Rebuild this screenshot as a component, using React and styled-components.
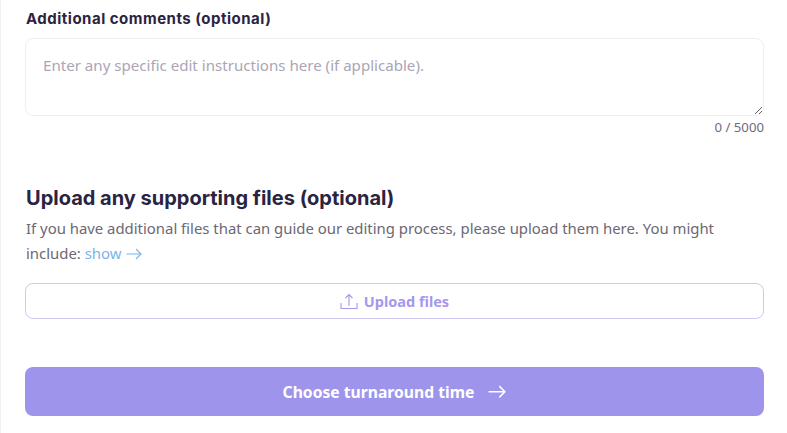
import React from "react";
import styled, { createGlobalStyle } from "styled-components";

const GlobalStyle = createGlobalStyle`
  html, body {
    margin: 0;
    padding: 0;
    background: #fff;
    overflow: hidden;
  }
`;

const Page = styled.div`
  width: 787px;
  height: 433px;
  box-sizing: border-box;
  padding: 10px 23px 0 24px;
  border-left: 1px solid #f2f2f2;
  font-family: "Noto Sans", "Liberation Sans", sans-serif;
  color: #6b6873;
`;

const Label = styled.label`
  display: block;
  height: 18px;
  line-height: 18px;
  margin-bottom: 10px;
  padding-left: 1px;
  font-family: "Inter", sans-serif;
  font-size: 15px;
  font-weight: 700;
  letter-spacing: 0.5px;
  color: #2a2342;
`;

const CommentBox = styled.textarea`
  display: block;
  width: 100%;
  height: 78px;
  box-sizing: border-box;
  padding: 15px 17px;
  border: 1px solid #efeef1;
  border-radius: 8px;
  outline: none;
  font-family: "Noto Sans", sans-serif;
  font-size: 15.1px;
  line-height: 22px;
  &::placeholder {
    color: #aaa6b6;
    opacity: 1;
  }
`;

const Counter = styled.div`
  margin-top: 2px;
  height: 18px;
  line-height: 18px;
  text-align: right;
  font-size: 13.2px;
  color: #6e6d7a;
`;

const Heading = styled.h2`
  margin: 50px 0 0;
  padding-left: 1px;
  height: 24px;
  line-height: 24px;
  font-family: "Inter", sans-serif;
  font-size: 20px;
  font-weight: 700;
  color: #2a2342;
`;

const Description = styled.p`
  margin: 6px 0 0;
  padding-left: 1px;
  font-size: 14.9px;
  line-height: 25px;
`;

const ShowLink = styled.a`
  color: #79b4ea;
  svg {
    margin-left: 1px;
    vertical-align: -1px;
  }
`;

const UploadButton = styled.button`
  display: flex;
  align-items: center;
  justify-content: center;
  gap: 6px;
  width: 100%;
  height: 36px;
  margin-top: 17px;
  padding: 0;
  background: #fff;
  border: 1px solid #cfc8f3;
  border-radius: 8px;
  font-family: "Noto Sans", sans-serif;
  font-size: 14.5px;
  font-weight: 700;
  color: #a597ee;
`;

const SubmitButton = styled.button`
  display: flex;
  align-items: center;
  justify-content: center;
  gap: 14px;
  width: 100%;
  height: 49px;
  margin-top: 48px;
  padding: 0;
  background: #9e94ec;
  border: 0;
  border-radius: 8px;
  font-family: "Noto Sans", sans-serif;
  font-size: 15.7px;
  font-weight: 700;
  color: #fff;
`;

function ArrowIcon({ size, color, weight = 1.1 }) {
  return (
    <svg width={size} height={size * 0.75} viewBox="0 0 16 12" fill="none" stroke={color} strokeWidth={weight}>
      <path d="M0.5 6H15M10 1l5 5-5 5" />
    </svg>
  );
}

function UploadIcon() {
  return (
    <svg width="18" height="17" viewBox="0 0 18 17" fill="none" stroke="#a597ee" strokeWidth="1.1">
      <path d="M1 10v5.5h16V10M9 13V1.5M5.5 5L9 1.5 12.5 5" />
    </svg>
  );
}

export default function App() {
  return (
    <>
      <GlobalStyle />
      <Page>
        <Label>Additional comments (optional)</Label>
        <CommentBox placeholder="Enter any specific edit instructions here (if applicable)." />
        <Counter>0 / 5000</Counter>
        <Heading>Upload any supporting files (optional)</Heading>
        <Description>
          If you have additional files that can guide our editing process, please upload them here. You might include:{" "}
          <ShowLink>
            show <ArrowIcon size={16} color="#79b4ea" />
          </ShowLink>
        </Description>
        <UploadButton>
          <UploadIcon />
          Upload files
        </UploadButton>
        <SubmitButton>
          Choose turnaround time
          <ArrowIcon size={18} color="#fff" weight={1.3} />
        </SubmitButton>
      </Page>
    </>
  );
}
